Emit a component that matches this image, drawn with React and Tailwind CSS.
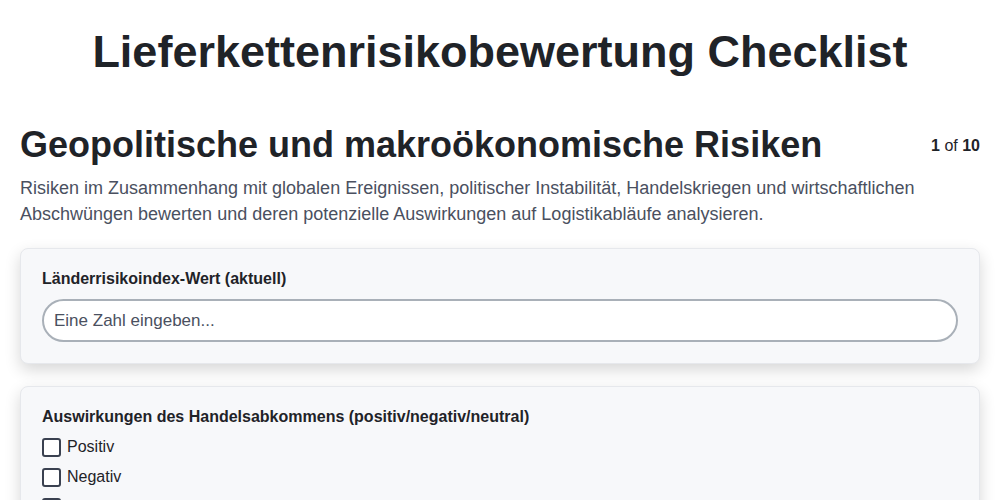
export default function App() {
  return (
    <div className="min-h-[500px] bg-white text-[#1f2328]" style={{ fontFamily: '"Liberation Sans", Arial, sans-serif' }}>
      <h1 className="pt-[24px] text-center text-[45px] font-bold leading-[56px] text-[#1f2328]">Lieferkettenrisikobewertung Checklist</h1>
      <div className="px-[20px] pt-[41px]">
        <div className="flex items-start justify-between">
          <h2 className="text-[36px] font-bold leading-[48px] text-[#1f2328]">Geopolitische und makroökonomische Risiken</h2>
          <div className="pt-[13px] text-[16px] text-[#1f2328]"><span className="font-bold">1</span> of <span className="font-bold">10</span></div>
        </div>
        <p className="mt-[6px] text-[18px] leading-[26px] text-[#4a5060]">Risiken im Zusammenhang mit globalen Ereignissen, politischer Instabilität, Handelskriegen und wirtschaftlichen Abschwüngen bewerten und deren potenzielle Auswirkungen auf Logistikabläufe analysieren.</p>
        <div className="mt-[21px] flex flex-col gap-[22px]">
          <div className="rounded-[8px] border border-[#e6e8ec] bg-[#f7f8fa] px-[21px] pt-[20px] pb-[21px] shadow-[0_6px_16px_rgba(0,0,0,0.16)]">
            <label className="block text-[16px] font-bold leading-[20px] text-[#1f2328]">Länderrisikoindex-Wert (aktuell)</label>
            <input className="mt-[10px] block h-[43px] w-full rounded-full border-2 border-[#a9b0b8] bg-white px-[10px] text-[17px] text-[#1f2328] placeholder:text-[#4a5060] outline-none" placeholder="Eine Zahl eingeben..." />
          </div>
          <div className="rounded-[8px] border border-[#e6e8ec] bg-[#f7f8fa] px-[21px] pt-[20px] pb-[21px] shadow-[0_6px_16px_rgba(0,0,0,0.16)]">
            <label className="block text-[16px] font-bold leading-[20px] text-[#1f2328]">Auswirkungen des Handelsabkommens (positiv/negativ/neutral)</label>
            <div className="mt-[10px] flex flex-col gap-[10px]">
              {["Positiv", "Negativ", "Neutral"].map((t) => (
                <label key={t} className="flex items-center gap-[6px] text-[16px] leading-[20px] text-[#1f2328]">
                  <span className="block h-[19px] w-[19px] rounded-[3px] border-2 border-[#3a4150] bg-white"></span>
                  {t}
                </label>
              ))}
            </div>
          </div>
        </div>
      </div>
    </div>
  );
}
